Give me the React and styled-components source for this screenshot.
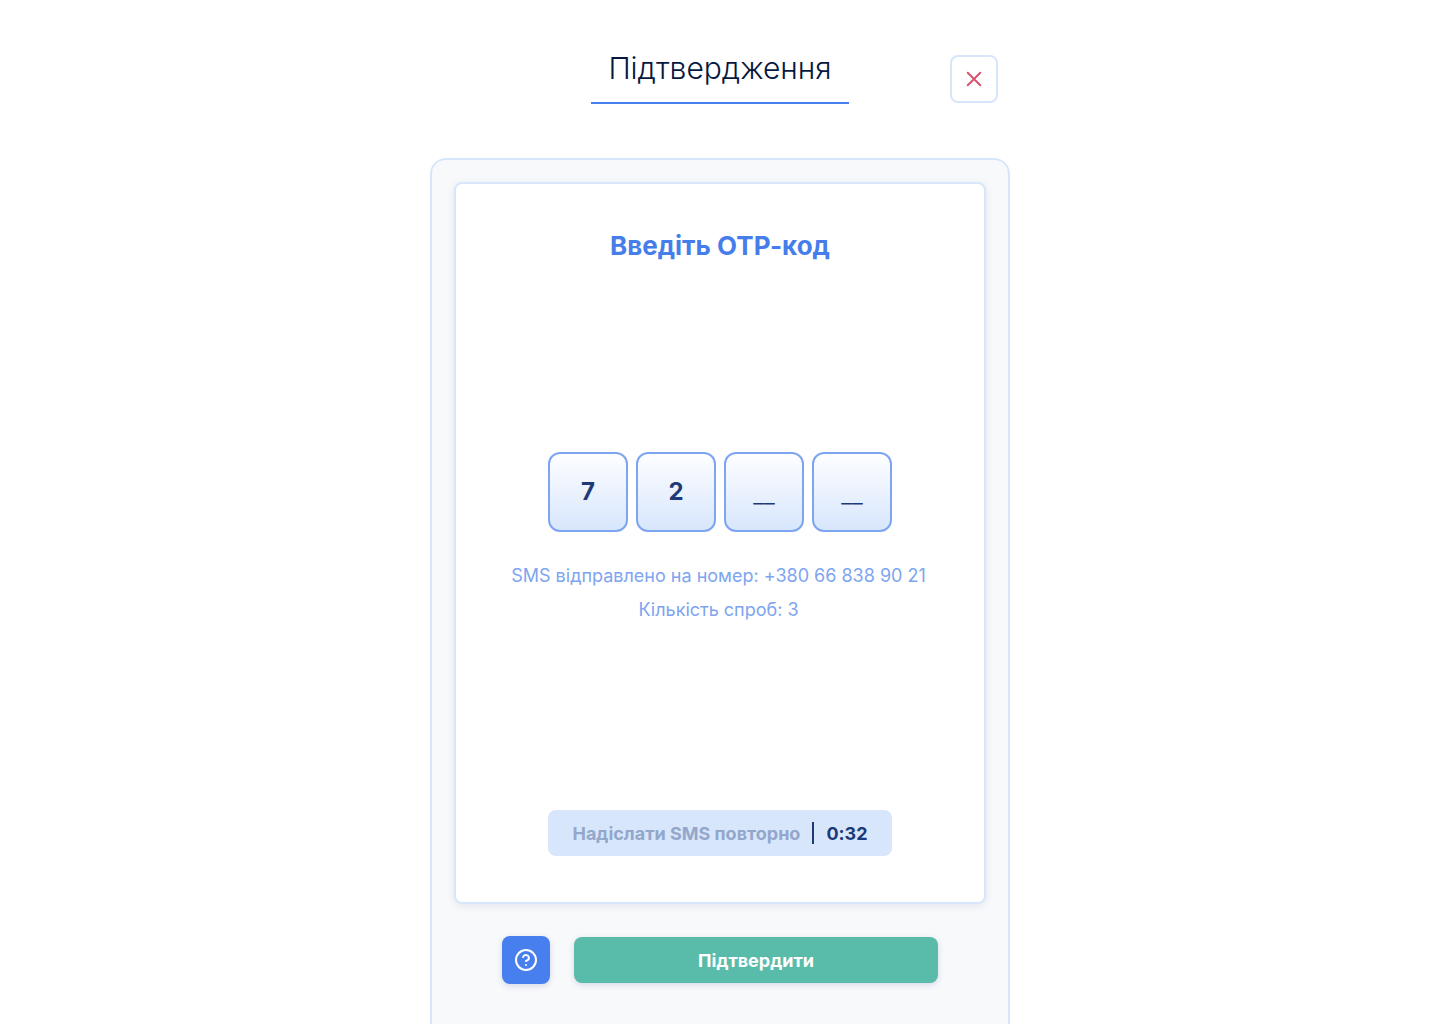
import React, { useState } from "react";
import styled, { createGlobalStyle } from "styled-components";

const GlobalStyle = createGlobalStyle`
  *, *::before, *::after { box-sizing: border-box; }
  body {
    margin: 0;
    background: #fff;
    font-family: Inter, "Noto Sans", sans-serif;
    font-feature-settings: "calt" 0;
  }
  h1, h2, p { margin: 0; }
  button, input { font-family: inherit; font-feature-settings: inherit; }
`;

const Page = styled.main`
  width: 100%;
  max-width: 580px;
  min-height: 100vh;
  margin: 0 auto;
  display: flex;
  flex-direction: column;
`;

const Header = styled.header`
  display: grid;
  grid-template-columns: 1fr auto 1fr;
  align-items: center;
  padding: 34px 12px 54px;
`;

const Title = styled.h1`
  grid-column: 2;
  padding: 16px 17px;
  border-bottom: 2px solid #487fee;
  color: #06183f;
  font-size: 30px;
  line-height: 36px;
  font-weight: 300;
`;

const CloseButton = styled.button`
  justify-self: end;
  display: grid;
  place-items: center;
  width: 48px;
  height: 48px;
  margin-top: 20px;
  padding: 0;
  border: 2px solid #d8e6fc;
  border-radius: 8px;
  background: #fff;
  color: #d9536f;
`;

const Panel = styled.section`
  flex: 1;
  padding: 22px 22px 0;
  border: 2px solid #d8e6fc;
  border-bottom: 0;
  border-radius: 16px 16px 0 0;
  background: #f8f9fb;
`;

const Card = styled.div`
  display: flex;
  flex-direction: column;
  align-items: center;
  justify-content: space-between;
  min-height: 722px;
  padding: 46px;
  border: 2px solid #d8e6fc;
  border-radius: 8px;
  background: #fff;
  box-shadow: 0 2px 8px rgba(29, 58, 120, 0.1);
`;

const CardTitle = styled.h2`
  color: #457eeb;
  font-size: 26px;
  line-height: 32px;
  font-weight: 700;
`;

const CodeArea = styled.div`
  display: flex;
  flex-direction: column;
  align-items: center;
  gap: 32px;
  padding-top: 1px;
`;

const Digits = styled.div`
  display: flex;
  gap: 8px;
`;

const Digit = styled.input`
  width: 80px;
  height: 80px;
  padding: 0;
  border: 2px solid #7ea5ef;
  border-radius: 12px;
  background: linear-gradient(#fdfeff, #d8e6fc);
  color: #1d3a78;
  font-size: 24px;
  font-weight: 700;
  text-align: center;
  &:placeholder-shown { padding-top: 6px; }
  &::placeholder { color: #1d3a78; opacity: 1; font-weight: 300; }
`;

const Hints = styled.div`
  display: flex;
  flex-direction: column;
  gap: 10px;
  padding-right: 3px;
`;

const Hint = styled.p`
  color: #7ea5ef;
  font-size: 18px;
  line-height: 24px;
  text-align: center;
`;

const ResendButton = styled.button`
  display: flex;
  align-items: center;
  justify-content: center;
  gap: 12px;
  height: 46px;
  padding: 0 24px;
  border: 0;
  border-radius: 8px;
  background: #d8e6fc;
  color: #93a7cb;
  font-size: 18px;
  font-weight: 700;
`;

const Divider = styled.span`
  width: 2px;
  height: 22px;
  background: #1d3a78;
`;

const Timer = styled.span`
  color: #1d3a78;
`;

const Actions = styled.div`
  display: flex;
  align-items: center;
  gap: 24px;
  padding: 32px 48px;
`;

const HelpButton = styled.button`
  display: grid;
  place-items: center;
  width: 48px;
  height: 48px;
  padding: 0;
  border: 0;
  border-radius: 8px;
  background: #487fee;
  color: #fff;
  box-shadow: 0 2px 6px rgba(29, 58, 120, 0.16);
`;

const ConfirmButton = styled.button`
  flex: 1;
  height: 46px;
  border: 0;
  border-radius: 8px;
  background: #59bbaa;
  color: #fff;
  font-size: 18px;
  font-weight: 700;
  box-shadow: 0 2px 6px rgba(29, 58, 120, 0.16);
`;

export default function App() {
  const [code, setCode] = useState(["7", "2", "", ""]);
  const change = (index, value) =>
    setCode(code.map((digit, i) => (i === index ? value : digit)));

  return (
    <>
      <GlobalStyle />
      <Page>
        <Header>
          <Title>Підтвердження</Title>
          <CloseButton type="button" aria-label="Закрити">
            <svg width="24" height="24" viewBox="0 0 24 24" fill="none" stroke="currentColor" strokeWidth="2" strokeLinecap="round">
              <path d="M5.75 5.75 18.25 18.25M18.25 5.75 5.75 18.25" />
            </svg>
          </CloseButton>
        </Header>
        <Panel>
          <Card>
            <CardTitle>Введіть OTP-код</CardTitle>
            <CodeArea>
              <Digits>
                {code.map((digit, index) => (
                  <Digit
                    key={index}
                    aria-label={`Цифра ${index + 1}`}
                    inputMode="numeric"
                    maxLength={1}
                    placeholder="__"
                    value={digit}
                    onChange={(event) => change(index, event.target.value)}
                  />
                ))}
              </Digits>
              <Hints>
                <Hint>SMS відправлено на номер: +380 66 838 90 21</Hint>
                <Hint>Кількість спроб: 3</Hint>
              </Hints>
            </CodeArea>
            <ResendButton type="button">
              Надіслати SMS повторно
              <Divider />
              <Timer>0:32</Timer>
            </ResendButton>
          </Card>
          <Actions>
            <HelpButton type="button" aria-label="Допомога">
              <svg width="24" height="24" viewBox="0 0 24 24" fill="none" stroke="currentColor" strokeWidth="2" strokeLinecap="round" strokeLinejoin="round">
                <circle cx="12" cy="12" r="10" />
                <path d="M9.1 9a3 3 0 0 1 5.8 1c0 2-3 3-3 3M12 17h.01" />
              </svg>
            </HelpButton>
            <ConfirmButton type="button">Підтвердити</ConfirmButton>
          </Actions>
        </Panel>
      </Page>
    </>
  );
}
